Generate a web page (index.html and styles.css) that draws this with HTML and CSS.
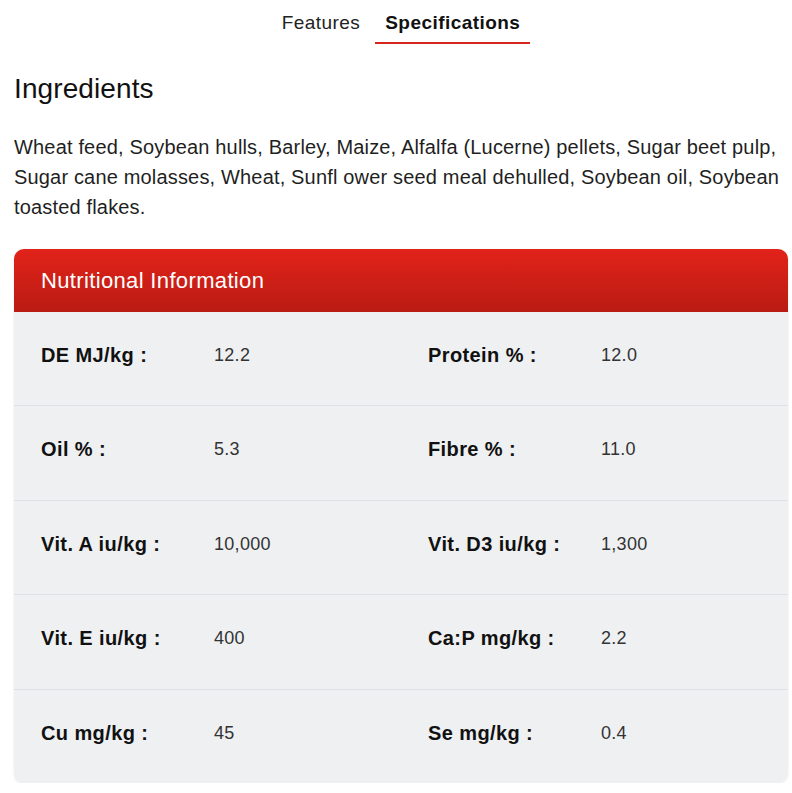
FILE: index.html
```html
<!DOCTYPE html>
<html>
<head>
<meta charset="utf-8">
<link rel="stylesheet" href="styles.css">
</head>
<body>
<div class="page">
  <nav class="tabs">
    <span class="tab">Features</span>
    <span class="tab active">Specifications</span>
  </nav>
  <h2 class="title">Ingredients</h2>
  <p class="ingredients">Wheat feed, Soybean hulls, Barley, Maize, Alfalfa (Lucerne) pellets, Sugar beet pulp, Sugar cane molasses, Wheat, Sunfl ower seed meal dehulled, Soybean oil, Soybean toasted flakes.</p>
  <section class="card">
    <header class="card-head">Nutritional Information</header>
    <div class="row">
      <div class="cell"><span class="label">DE MJ/kg :</span><span class="value">12.2</span></div>
      <div class="cell"><span class="label">Protein % :</span><span class="value">12.0</span></div>
    </div>
    <div class="row">
      <div class="cell"><span class="label">Oil % :</span><span class="value">5.3</span></div>
      <div class="cell"><span class="label">Fibre % :</span><span class="value">11.0</span></div>
    </div>
    <div class="row">
      <div class="cell"><span class="label">Vit. A iu/kg :</span><span class="value">10,000</span></div>
      <div class="cell"><span class="label">Vit. D3 iu/kg :</span><span class="value">1,300</span></div>
    </div>
    <div class="row">
      <div class="cell"><span class="label">Vit. E iu/kg :</span><span class="value">400</span></div>
      <div class="cell"><span class="label">Ca:P mg/kg :</span><span class="value">2.2</span></div>
    </div>
    <div class="row">
      <div class="cell"><span class="label">Cu mg/kg :</span><span class="value">45</span></div>
      <div class="cell"><span class="label">Se mg/kg :</span><span class="value">0.4</span></div>
    </div>
  </section>
</div>
</body>
</html>
```
FILE: styles.css
```css
* { box-sizing: border-box; }
html, body { margin: 0; padding: 0; background: #fff; }
body {
  font-family: "Liberation Sans", Arial, sans-serif;
  color: #1a1a1a;
}
.page {
  padding: 0 4px 0 14px;
}
.tabs {
  display: flex;
  justify-content: center;
  gap: 5px;
  height: 44px;
}
.tab {
  font-size: 19px;
  letter-spacing: 0.45px;
  line-height: 20px;
  padding: 13px 10px 9px;
  color: #222;
}
.tab.active {
  font-weight: bold;
  color: #111;
  border-bottom: 2px solid #d7261c;
}
.title {
  margin: 29px 0 0;
  font-size: 28px;
  letter-spacing: 0.1px;
  line-height: 32px;
  font-weight: normal;
  color: #111;
}
.ingredients {
  margin: 27px 0 0;
  font-size: 20px;
  letter-spacing: 0.17px;
  line-height: 30px;
  color: #1f1f1f;
}
.card {
  margin-top: 27px;
  border-radius: 10px;
  overflow: hidden;
  background: #eef0f2;
  box-shadow: 0 1px 3px rgba(0,0,0,0.08);
}
.card-head {
  height: 63px;
  padding: 0 27px;
  display: flex;
  align-items: center;
  font-size: 22px;
  letter-spacing: 0.35px;
  color: #fff;
  background: linear-gradient(#e2231a, #b91b13);
}
.row {
  display: grid;
  grid-template-columns: 1fr 1fr;
  height: 94.5px;
  border-top: 1px solid #dde1e5;
}
.card-head + .row { border-top: none; height: 93px; }
.cell {
  display: flex;
  align-items: center;
  padding: 0 27px 6px;
}
.label {
  width: 173px;
  flex: none;
  font-size: 20px;
  letter-spacing: 0.4px;
  font-weight: bold;
  color: #111;
}
.value {
  font-size: 18px;
  letter-spacing: 0.3px;
  color: #333;
}
```
